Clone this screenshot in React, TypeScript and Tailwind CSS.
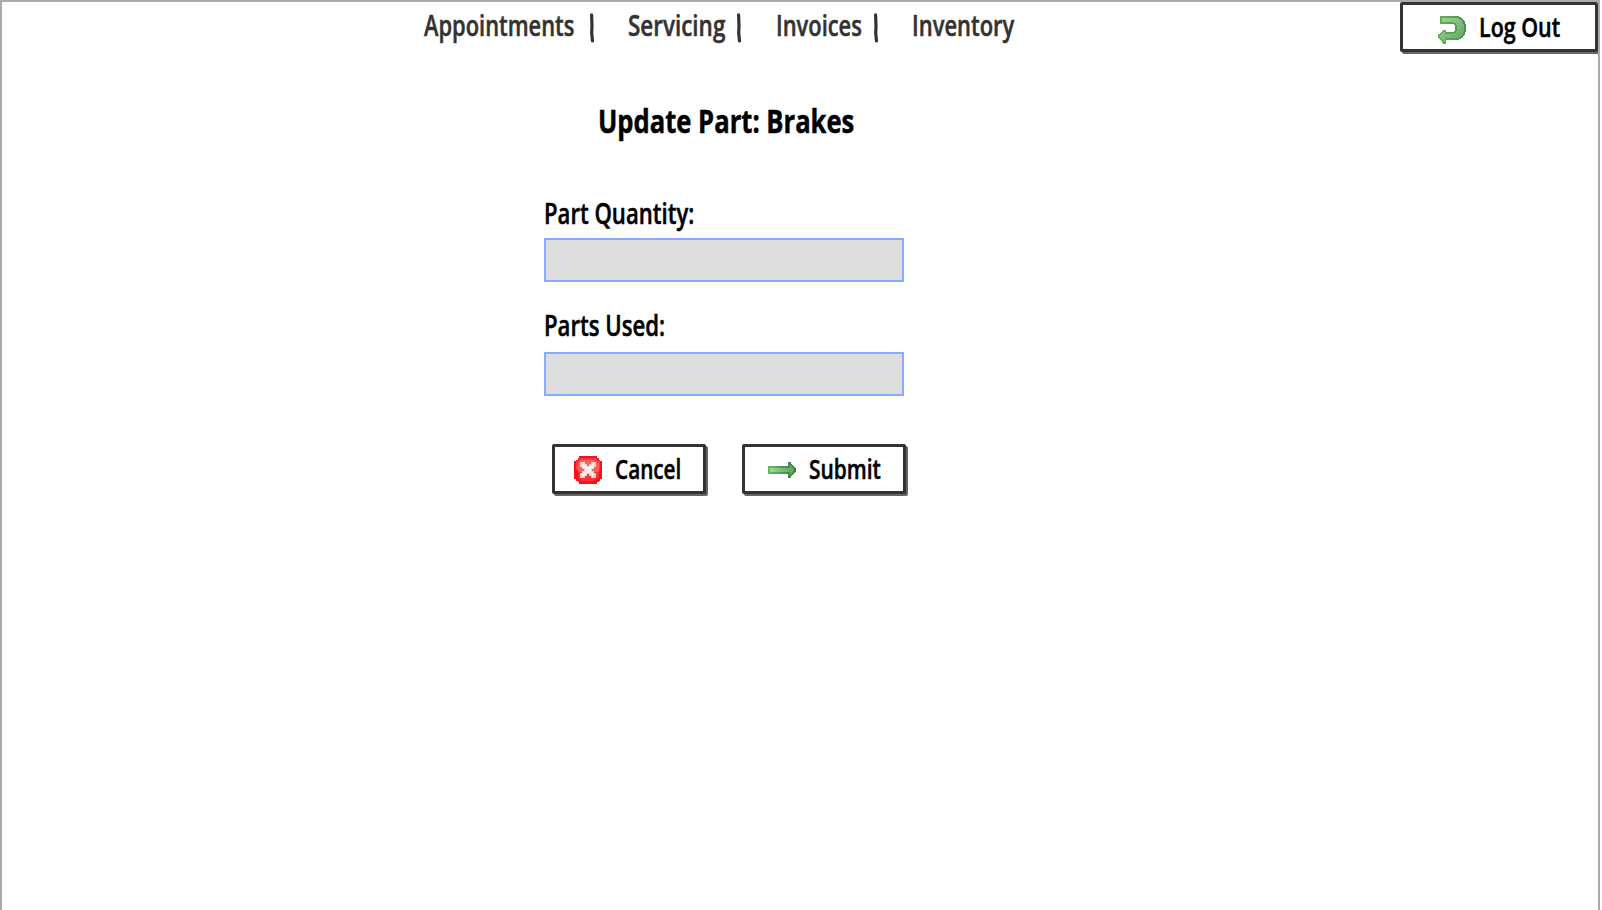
import { useLayoutEffect, useRef, useState } from "react";

/* Text squeezed horizontally to a given width, for a condensed hand-lettered look. */
function Fit({ text, width, className = "" }: { text: string; width: number; className?: string }) {
  const ref = useRef<HTMLSpanElement>(null);
  const [scale, setScale] = useState(1);
  useLayoutEffect(() => {
    if (ref.current) setScale(width / ref.current.offsetWidth);
  }, [width]);
  return (
    <span className={`block [-webkit-text-stroke:0.5px_currentColor] [paint-order:stroke_fill] [stroke-linejoin:round] ${className}`} style={{ width }}>
      <span ref={ref} className="inline-block origin-left whitespace-nowrap" style={{ transform: `scaleX(${scale})` }}>
        {text}
      </span>
    </span>
  );
}

function Bar() {
  return (
    <svg className="mt-[13px] h-[30px] w-[6px] shrink-0" viewBox="0 0 6 30" fill="none" stroke="#333" strokeWidth="3.2" strokeLinecap="round">
      <path d="M2.6 1.8 L3 13 L2.7 20 L3.5 28" />
    </svg>
  );
}

function ReturnIcon() {
  return (
    <svg className="mt-[5px] h-7 w-7 shrink-0" viewBox="0 0 16 16" shapeRendering="crispEdges">
      <defs>
        <linearGradient id="ret" x1="0" y1="0" x2="1" y2="1">
          <stop offset="0" stopColor="#a6d59d" />
          <stop offset="1" stopColor="#5aa15c" />
        </linearGradient>
        <linearGradient id="rets" x1="0" y1="0" x2="1" y2="0">
          <stop offset="0" stopColor="#62b257" />
          <stop offset="1" stopColor="#4c9150" />
        </linearGradient>
      </defs>
      <path
        d="M1.5 .5H10C13.5 .5 15.5 3.2 15.5 7S13.5 13.3 10 13.3H4.3V15.5H3.5L.5 12V11L3.5 8.4H4.3V9.5H8.5C9.8 9.5 10.5 8.5 10.5 7S9.8 4.2 8.5 4.2H1.5Z"
        fill="url(#ret)"
        stroke="url(#rets)"
        strokeWidth="1"
      />
    </svg>
  );
}

function CancelIcon() {
  return (
    <svg className="mt-[2px] h-7 w-7 shrink-0" viewBox="0 0 16 16" shapeRendering="crispEdges">
      <path d="M3 0H13V1H14V2H15V3H16V13H15V14H14V15H13V16H3V15H2V14H1V13H0V3H1V2H2V1H3Z" fill="#fa0f1c" />
      <path d="M3 1H13V2H14V3H15V8H14V4H12V2H4V4H2V8H1V3H2V2H3Z" fill="#fb3a40" />
      <path d="M4 2H12V3H13V4H14V9H2V4H3V3H4Z" fill="#ff5c5c" />
      <path d="M2 9H14V12H13V13H12V14H4V13H3V12H2Z" fill="#fc3238" />
      <path d="M4 4H6V5H7V6H9V5H10V4H12V6H11V7H10V9H11V10H12V12H10V11H9V10H7V11H6V12H4V10H5V9H6V7H5V6H4Z" fill="#fff0f0" stroke="#ffd0d0" strokeWidth="0.6" />
    </svg>
  );
}

function ArrowIcon() {
  return (
    <svg className="mt-[2px] h-7 w-7 shrink-0" viewBox="0 0 16 16" shapeRendering="crispEdges">
      <defs>
        <linearGradient id="arr" x1="0" y1="0" x2="1" y2="0">
          <stop offset="0" stopColor="#a9d5a0" />
          <stop offset="1" stopColor="#5a9f5c" />
        </linearGradient>
        <linearGradient id="arrs" x1="0" y1="0" x2="1" y2="0">
          <stop offset="0" stopColor="#66b95c" />
          <stop offset="1" stopColor="#3c7f44" />
        </linearGradient>
      </defs>
      <path d="M.5 6.2H11.8V4L12.5 4L15.5 7.5V8.5L12.5 12H11.8V9.9H.5Z" fill="url(#arr)" stroke="url(#arrs)" strokeWidth="1" />
    </svg>
  );
}

const button =
  "flex h-[50px] shrink-0 items-center rounded-[2px] border-[3px] border-[#333] bg-white text-[27px] leading-none font-semibold text-black shadow-[2px_2px_0_#666]";

export default function App() {
  return (
    <div className="flex h-[910px] w-[1600px] flex-col overflow-hidden border-x-2 border-t-2 border-[#aaa] bg-white font-['Open_Sans',sans-serif] text-black">
      <header className="-mt-[2px] flex h-[54px] shrink-0 justify-between">
        <nav className="flex items-start pl-[422px] text-[28px] leading-[50px] font-semibold text-[#333]">
          <Fit text="Appointments" width={150} />
          <span className="w-[15px]" />
          <Bar />
          <span className="w-[33px]" />
          <Fit text="Servicing" width={97} />
          <span className="w-[11px]" />
          <Bar />
          <span className="w-[34px]" />
          <Fit text="Invoices" width={86} />
          <span className="w-[11px]" />
          <Bar />
          <span className="w-[33px]" />
          <Fit text="Inventory" width={102} />
        </nav>
        <button className={`${button} mt-[2px] w-[198px] pl-[35px]`}>
          <ReturnIcon />
          <Fit text="Log Out" width={81} className="-mt-[2px] ml-[13px] text-left" />
        </button>
      </header>

      <main className="ml-[542px] flex w-[366px] flex-col">
        <h1 className="ml-[54px] mt-[42px] h-[50px] text-[33px] leading-[50px] font-bold">
          <Fit text="Update Part: Brakes" width={256} />
        </h1>
        <label className="mt-[47px] h-[40px] text-[28px] leading-[40px] font-semibold">
          <Fit text="Part Quantity:" width={150} />
        </label>
        <input className="mt-[5px] h-[44px] w-[360px] border-2 border-[#88aaff] bg-[#ddd]" />
        <label className="mt-[23px] h-[40px] text-[28px] leading-[40px] font-semibold">
          <Fit text="Parts Used:" width={121} />
        </label>
        <input className="mt-[7px] h-[44px] w-[360px] border-2 border-[#88aaff] bg-[#ddd]" />
        <div className="mt-[48px] ml-[8px] flex gap-[36px]">
          <button className={`${button} w-[154px] pl-[19px]`}>
            <CancelIcon />
            <Fit text="Cancel" width={66} className="-mt-[2px] ml-[13px] text-left" />
          </button>
          <button className={`${button} w-[164px] pl-[23px]`}>
            <ArrowIcon />
            <Fit text="Submit" width={72} className="-mt-[2px] ml-[13px] text-left" />
          </button>
        </div>
      </main>
    </div>
  );
}
